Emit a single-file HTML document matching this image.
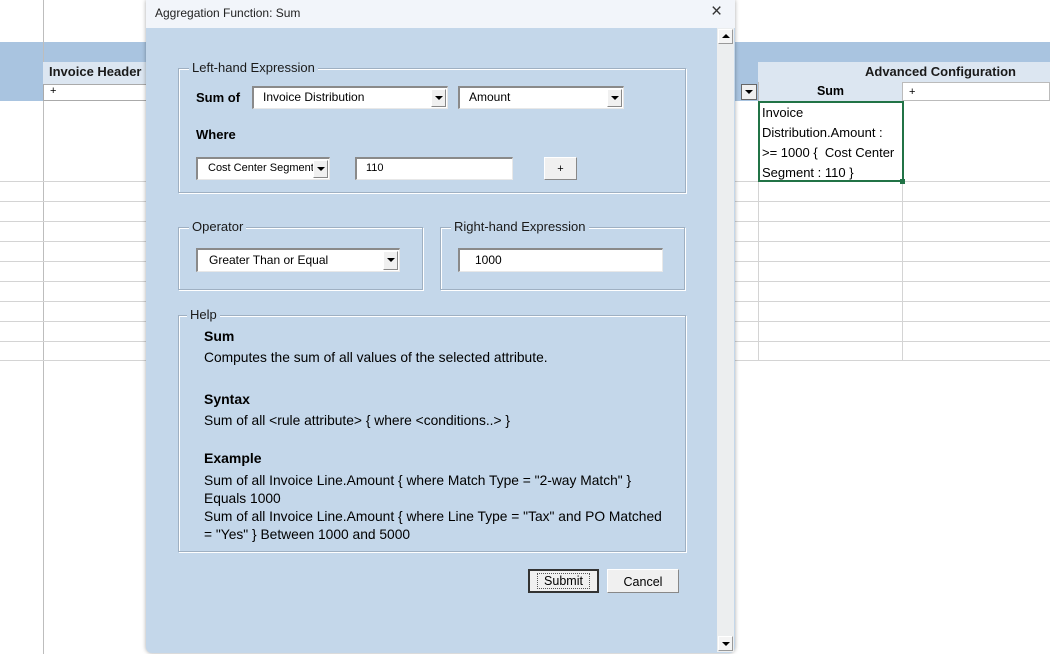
<!DOCTYPE html>
<html><head><meta charset="utf-8"><style>
*{margin:0;padding:0;box-sizing:border-box}
body{width:1050px;height:654px;overflow:hidden;background:#fff;position:relative;font-family:"Liberation Sans",sans-serif;font-size:12.5px;color:#000}
.a{position:absolute}
.hl{position:absolute;height:1px;background:#d4d4d4}
.vl{position:absolute;width:1px;background:#bdbdbd}
.grp{position:absolute;border:1px solid #9fb0c2;box-shadow:inset 1px 1px 0 #fff,1px 1px 0 #fff}
.lg{position:absolute;top:-9px;left:10px;background:#c4d7ea;padding:0 3px;font-size:13px;color:#1a1a1a}
.fld{position:absolute;background:#fff;border-top:2px solid #8a8a8a;border-left:2px solid #8a8a8a;border-right:1px solid #e8e8e8;border-bottom:1px solid #e8e8e8;font-size:12px;padding:2px 0 0 9px;white-space:nowrap;overflow:hidden}
.dd{position:absolute;right:1px;top:1px;bottom:1px;width:15px;background:#f0f0f0;border:1px solid #888;border-top-color:#fff;border-left-color:#fff}
.dd:after{content:"";position:absolute;left:3px;top:6px;border-left:4px solid transparent;border-right:4px solid transparent;border-top:4px solid #000}
.btn{position:absolute;background:#f0f0f0;border:1px solid #888;border-top-color:#fff;border-left-color:#fff;text-align:center;font-size:12.5px}
.b{font-weight:bold}
</style></head><body>
<div class="a" style="left:0;top:42px;width:1050px;height:20px;background:#a9c4e0"></div>
<div class="a" style="left:0;top:62px;width:43px;height:39px;background:#a9c4e0"></div>
<div class="a" style="left:43px;top:62px;width:110px;height:22px;background:#dce6f1"></div>
<div class="a b" style="left:49px;top:64px;font-size:13px;color:#1a1a1a">Invoice Header</div>
<div class="a" style="left:43px;top:84px;width:110px;height:17px;background:#fff;border:1px solid #aaa"></div>
<div class="a" style="left:50px;top:85px;font-size:11px">+</div>
<div class="a" style="left:734px;top:62px;width:24px;height:39px;background:#a9c4e0"></div>
<div class="a" style="left:758px;top:62px;width:292px;height:20px;background:#dce6f1"></div>
<div class="a b" style="left:865px;top:64px;font-size:13px;color:#1a1a1a">Advanced Configuration</div>
<div class="a" style="left:741px;top:84px;width:16px;height:16px;background:#f0f0f0;border:1px solid #666"></div>
<div class="a" style="left:745px;top:90px;border-left:4px solid transparent;border-right:4px solid transparent;border-top:4px solid #000"></div>
<div class="a b" style="left:758px;top:82px;width:144px;height:19px;background:#dce6f1;border-left:1px solid #bbb;text-align:center;padding-top:2px;font-size:12.5px">Sum</div>
<div class="a" style="left:902px;top:82px;width:148px;height:19px;background:#fff;border:1px solid #bbb"></div>
<div class="a" style="left:909px;top:86px;font-size:11px">+</div>
<div class="vl" style="left:43px;top:0;height:62px"></div>
<div class="vl" style="left:43px;top:101px;height:553px"></div>
<div class="vl" style="left:758px;top:101px;height:260px;background:#d4d4d4"></div>
<div class="vl" style="left:902px;top:101px;height:260px;background:#d4d4d4"></div>
<div class="hl" style="left:0;top:181px;width:1050px"></div>
<div class="hl" style="left:0;top:201px;width:1050px"></div>
<div class="hl" style="left:0;top:221px;width:1050px"></div>
<div class="hl" style="left:0;top:241px;width:1050px"></div>
<div class="hl" style="left:0;top:261px;width:1050px"></div>
<div class="hl" style="left:0;top:281px;width:1050px"></div>
<div class="hl" style="left:0;top:301px;width:1050px"></div>
<div class="hl" style="left:0;top:321px;width:1050px"></div>
<div class="hl" style="left:0;top:341px;width:1050px"></div>
<div class="hl" style="left:0;top:360px;width:1050px"></div>
<div class="a" style="left:758px;top:101px;width:146px;height:81px;background:#fff;border:2px solid #217346;padding:0 0 0 2px;font-size:13px;line-height:20px">Invoice<br>Distribution.Amount :<br>&gt;= 1000 {&nbsp; Cost Center<br>Segment : 110 }</div>
<div class="a" style="left:900px;top:179px;width:5px;height:5px;background:#217346"></div>

<div class="a" style="left:146px;top:0;width:589px;height:653px;background:#c4d7ea;box-shadow:0 0 4px rgba(0,0,0,.35);border-radius:0 0 6px 6px">
 <div class="a" style="left:0;top:0;width:589px;height:28px;background:#f2f5fa"></div>
 <div class="a" style="left:9px;top:6px;font-size:12px;color:#222">Aggregation Function: Sum</div>
 <div class="a" style="left:565px;top:1px;font-size:19px;color:#333">×</div>
 <div class="a" style="left:571px;top:28px;width:17px;height:624px;background:#eceeef"></div>
 <div class="a" style="left:572px;top:29px;width:15px;height:15px;background:#f4f4f4;border:1px solid #999;border-top-color:#fff;border-left-color:#fff"></div>
 <div class="a" style="left:576px;top:34px;border-left:4px solid transparent;border-right:4px solid transparent;border-bottom:4px solid #000"></div>
 <div class="a" style="left:572px;top:636px;width:15px;height:15px;background:#f4f4f4;border:1px solid #999;border-top-color:#fff;border-left-color:#fff"></div>
 <div class="a" style="left:576px;top:642px;border-left:4px solid transparent;border-right:4px solid transparent;border-top:4px solid #000"></div>

 <div class="grp" style="left:32px;top:68px;width:508px;height:125px"><div class="lg">Left-hand Expression</div></div>
 <div class="a b" style="left:50px;top:90px;font-size:13px">Sum of</div>
 <div class="fld" style="left:106px;top:86px;width:196px;height:23px">Invoice Distribution<div class="dd"></div></div>
 <div class="fld" style="left:312px;top:86px;width:166px;height:23px">Amount<div class="dd"></div></div>
 <div class="a b" style="left:50px;top:127px;font-size:13px">Where</div>
 <div class="fld" style="left:50px;top:157px;width:134px;height:23px;font-size:11px;padding-left:10px;padding-top:3px">Cost Center Segment<div class="dd"></div></div>
 <div class="fld" style="left:209px;top:157px;width:158px;height:23px;font-size:11px;padding-top:3px">110</div>
 <div class="btn" style="left:398px;top:157px;width:33px;height:23px;font-size:11px;padding-top:5px">+</div>

 <div class="grp" style="left:32px;top:227px;width:245px;height:63px"><div class="lg">Operator</div></div>
 <div class="fld" style="left:50px;top:248px;width:204px;height:24px;padding-left:11px;padding-top:3px">Greater Than or Equal<div class="dd"></div></div>
 <div class="grp" style="left:294px;top:227px;width:245px;height:63px"><div class="lg">Right-hand Expression</div></div>
 <div class="fld" style="left:312px;top:248px;width:205px;height:24px;padding-left:15px;padding-top:3px">1000</div>

 <div class="grp" style="left:32px;top:315px;width:508px;height:237px"><div class="lg" style="left:8px">Help</div></div>
 <div class="a" style="left:58px;top:327px;font-size:13.8px;line-height:18px;white-space:nowrap">
  <div class="b" style="font-size:14px">Sum</div>
  <div style="margin-top:4px">Computes the sum of all values of the selected attribute.</div>
  <div class="b" style="margin-top:23px;font-size:14px">Syntax</div>
  <div style="margin-top:4px">Sum of all &lt;rule attribute&gt; { where &lt;conditions..&gt; }</div>
  <div class="b" style="margin-top:19px;font-size:14px">Example</div>
  <div style="margin-top:5px">Sum of all Invoice Line.Amount { where Match Type = "2-way Match" }<br>Equals 1000<br>Sum of all Invoice Line.Amount { where Line Type = "Tax" and PO Matched<br>= "Yes" } Between 1000 and 5000</div>
 </div>

 <div class="btn" style="left:382px;top:569px;width:71px;height:24px;border:2px solid #333;padding-top:3px"><span style="outline:1px dotted #555;padding:0 6px">Submit</span></div>
 <div class="btn" style="left:461px;top:569px;width:72px;height:24px;padding-top:5px">Cancel</div>
</div>
</body></html>
